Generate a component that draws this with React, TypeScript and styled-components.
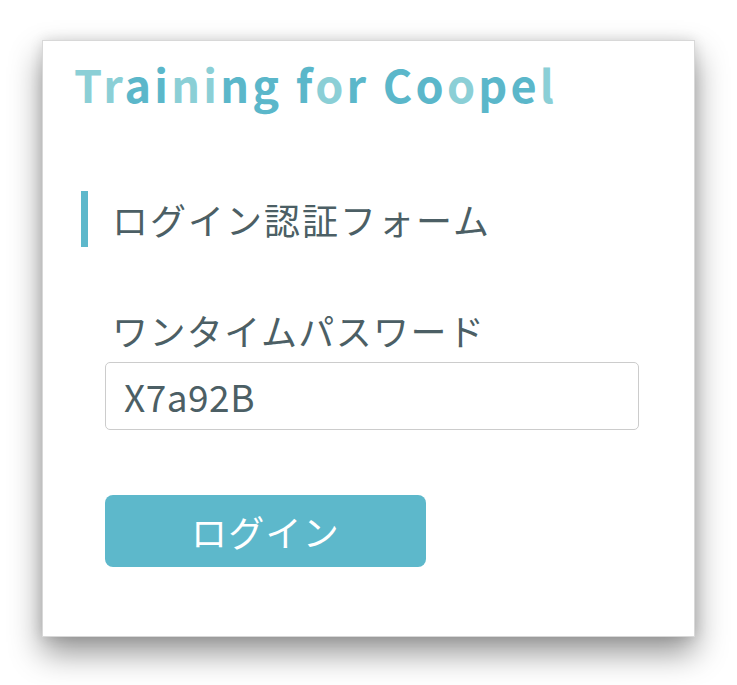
import React from "react";
import styled, { createGlobalStyle } from "styled-components";

const Global = createGlobalStyle`
  html, body { margin: 0; padding: 0; background: #ffffff; }
  body { font-family: "Noto Sans CJK JP", "Noto Sans", sans-serif; }
`;

const Page = styled.div`
  padding: 40px 42px 48px 42px;
  width: 737px;
  box-sizing: border-box;
`;

const Card = styled.div`
  width: 653px;
  height: 597px;
  box-sizing: border-box;
  background: #ffffff;
  border: 1px solid #d8d8d8;
  box-shadow: 0 16px 30px rgba(0, 0, 0, 0.42), 0 0 12px rgba(0, 0, 0, 0.12);
  padding: 11px 32px 0 31px;
  display: flex;
  flex-direction: column;
`;

const Title = styled.h1`
  margin: 0;
  font-family: "Noto Sans CJK JP", "Noto Sans", sans-serif;
  font-weight: 700;
  font-size: 45px;
  line-height: 64px;
  letter-spacing: 3.2px;
`;

const Letter = styled.span<{ $dark: boolean }>`
  color: ${(p) => (p.$dark ? "#5bb7ca" : "#8bcfd6")};
`;

const SectionHeading = styled.h2`
  margin: 75px 0 0 7px;
  padding-left: 24px;
  border-left: 7px solid #5db8cb;
  font-weight: 400;
  font-size: 36px;
  line-height: 56px;
  color: #4c5f65;
  letter-spacing: 2px;
`;

const Form = styled.form`
  display: flex;
  flex-direction: column;
  padding-left: 31px;
  margin-top: 59px;
`;

const Label = styled.label`
  font-size: 36px;
  line-height: 48px;
  color: #4c5f65;
  letter-spacing: 1.4px;
  margin-left: 7px;
`;

const Input = styled.input`
  margin-top: 8px;
  width: 534px;
  height: 68px;
  box-sizing: border-box;
  border: 1.5px solid #cccccc;
  border-radius: 5px;
  padding: 0 18px;
  font-family: "Noto Sans CJK JP", "Noto Sans", sans-serif;
  font-size: 37px;
  letter-spacing: 0.5px;
  color: #4c5f65;
  outline: none;
  background: #fff;
`;

const Button = styled.button`
  margin-top: 65px;
  width: 321px;
  height: 72px;
  border: none;
  border-radius: 8px;
  background: #5db8cb;
  color: #ffffff;
  font-family: "Noto Sans CJK JP", "Noto Sans", sans-serif;
  font-size: 36px;
  letter-spacing: 1.2px;
  cursor: pointer;
  padding: 0;
`;

const title = "Training for Coopel";
const dark = [0, 0, 1, 1, 0, 0, 1, 1, 0, 1, 0, 1, 0, 1, 1, 0, 1, 1, 0];

export default function App() {
  return (
    <>
      <Global />
      <Page>
        <Card>
          <Title>
            {title.split("").map((c, i) => (
              <Letter key={i} $dark={!!dark[i]}>
                {c}
              </Letter>
            ))}
          </Title>
          <SectionHeading>ログイン認証フォーム</SectionHeading>
          <Form onSubmit={(e) => e.preventDefault()}>
            <Label htmlFor="otp">ワンタイムパスワード</Label>
            <Input id="otp" type="text" defaultValue="X7a92B" />
            <div>
              <Button type="submit">ログイン</Button>
            </div>
          </Form>
        </Card>
      </Page>
    </>
  );
}
